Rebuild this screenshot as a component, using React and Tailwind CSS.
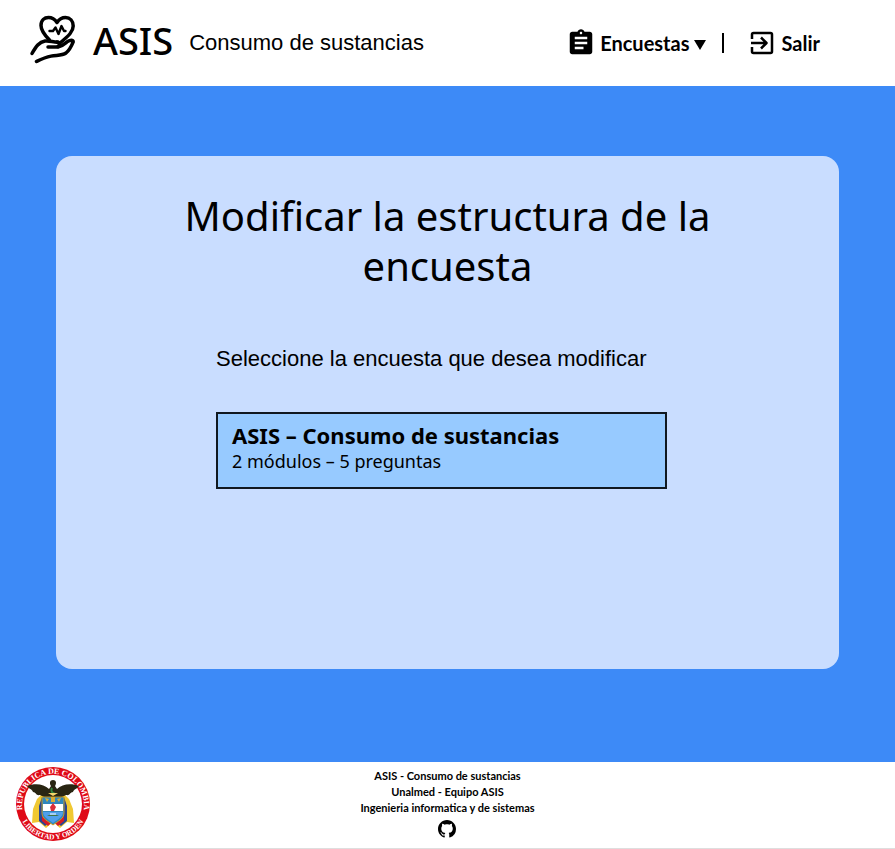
import { MdAssignment } from "react-icons/md";

function HeartHandIcon() {
  return (
    <svg
      viewBox="0 0 46 50"
      className="h-[50px] w-[46px] shrink-0"
      fill="none"
      stroke="#000"
      strokeWidth="3.5"
      strokeLinecap="round"
      strokeLinejoin="round"
      aria-hidden="true"
    >
      <path d="M20.500 26 C15.500 21 12 17 12 11.500 C12 6 15.500 3.500 19.500 3.500 C23.500 3.500 26 5.500 28 8.500 C30 5.500 32.500 3.500 36.500 3.500 C41 3.500 44.200 7 44.200 12 C44.200 17.500 40 21.500 31 29 L28 28" />
      <path strokeWidth="2.4" d="M20.500 17 H24 L26.500 13.500 L29.500 20 L32.500 12 L35 17 H36.500" />
      <path d="M3 39.500 C7 32.500 10 28 16 27 C21 26.300 24 28.500 29 28.300 C31.500 28.800 30.500 32.500 27.500 33 H19" />
      <path d="M29 33 C34 32 36 29.500 38.500 27.500 C41 26 44.300 25.500 44.200 27.800 C42.500 32 40.500 36 37 39 C33 41.800 28 41 22 42.100 C16 43.300 13 44.800 7.500 47.500" />
    </svg>
  );
}

function ExitIcon() {
  return (
    <svg
      viewBox="0 0 24 24"
      className="mr-2 size-6 shrink-0"
      fill="none"
      stroke="#000"
      strokeWidth="2.5"
      strokeLinejoin="round"
      aria-hidden="true"
    >
      <path d="M2 8 V3.500 Q2 2 3.500 2 H20.500 Q22 2 22 3.500 V20.500 Q22 22 20.500 22 H3.500 Q2 22 2 20.500 V16" />
      <path d="M1 12 H16 M11 6.500 L16.500 12 L11 17.500" />
    </svg>
  );
}

function GithubIcon() {
  return (
    <svg viewBox="0 0 16 16" className="size-[18px]" fill="#000" aria-hidden="true">
      <path d="M8 0C3.58 0 0 3.58 0 8c0 3.54 2.29 6.53 5.47 7.59.4.07.55-.17.55-.38 0-.19-.01-.82-.01-1.49-2.01.37-2.53-.49-2.69-.94-.09-.23-.48-.94-.82-1.13-.28-.15-.68-.52-.01-.53.63-.01 1.08.58 1.23.82.72 1.21 1.87.87 2.33.66.07-.52.28-.87.51-1.07-1.78-.2-3.64-.89-3.64-3.95 0-.87.31-1.59.82-2.15-.08-.2-.36-1.02.08-2.12 0 0 .67-.21 2.2.82.64-.18 1.32-.27 2-.27s1.36.09 2 .27c1.53-1.04 2.2-.82 2.2-.82.44 1.1.16 1.92.08 2.12.51.56.82 1.27.82 2.15 0 3.07-1.87 3.75-3.65 3.95.29.25.54.73.54 1.48 0 1.07-.01 1.93-.01 2.2 0 .21.15.46.55.38A8.01 8.01 0 0 0 16 8c0-4.42-3.58-8-8-8z" />
    </svg>
  );
}

function ColombiaSeal() {
  return (
    <svg viewBox="0 0 76 76" className="size-[76px]" role="img" aria-label="República de Colombia, Libertad y Orden">
      <defs>
        <path id="seal-top" d="M9.500 51 A31 31 0 1 1 66.500 51" />
        <path id="seal-bottom" d="M4 48 A35.500 35.500 0 0 0 72 48" />
      </defs>
      <circle cx="38" cy="38" r="37" fill="#df0a17" />
      <circle cx="38" cy="38" r="29" fill="#fff" />
      <g fill="#fff" fontFamily="Liberation Serif, serif" fontWeight="700" textAnchor="middle">
        <text fontSize="8">
          <textPath href="#seal-top" startOffset="50%">REPUBLICA DE COLOMBIA</textPath>
        </text>
        <text fontSize="7.5">
          <textPath href="#seal-bottom" startOffset="50%">LIBERTAD Y ORDEN</textPath>
        </text>
      </g>
      <path fill="#f0c832" d="M28 27 L22 33 L18 43 L17 57 L24 56 L31 62 L38 56 Z M48 27 L54 33 L58 43 L59 57 L52 56 L45 62 L38 56 Z" />
      <path fill="#2b4590" d="M27 31 L24 40 L24 55 L30 60 L35 56 Z M49 31 L52 40 L52 55 L46 60 L41 56 Z" />
      <path fill="#d61a26" d="M27 50 L27 55 L33 60 L37 56 Z M49 50 L49 55 L43 60 L39 56 Z" />
      <path fill="#292512" d="M38 14 C35 14 34 17 36 20 L34 23 C29 18 20 17 12 20 C14 23 17 23 18 26 C21 26 21 30 25 29 L31 32 H45 L51 29 C55 30 55 26 58 26 C59 23 62 23 64 20 C56 17 47 18 42 23 L40 20 C42 17 41 14 38 14 Z" />
      <path fill="none" stroke="#31863d" strokeWidth="2" d="M37 22 C35 26 38 27 40 28" />
      <path fill="#f5d46c" d="M33 27 H43 L38 30 Z" />
      <path fill="#2f87bd" stroke="#c99b23" strokeWidth="1" d="M27 31 H49 V47 C49 53 43 55 38 59 C33 55 27 53 27 47 Z" />
      <path fill="#fff" d="M28 38 H48 V45 H28 Z" />
      <path fill="#4f9fea" d="M28 46 H48 C48 51 42 54 38 57 C34 54 28 51 28 46 Z" />
      <path fill="#d9ae35" d="M30 32 L34 33 L32 36 Z M46 32 L42 33 L44 36 Z M36 31 H40 V36 H36 Z" />
      <path fill="#d9303b" d="M38 37 L41 41 L39 45 H36 L35 41 Z" />
      <path fill="#3f7445" d="M32 49 H44 L42 50 H34 Z" />
      <path fill="none" stroke="#fff" strokeWidth="1" d="M35 48 H41" />
    </svg>
  );
}

function Header() {
  return (
    <header className="flex h-[86px] items-center justify-between bg-white pr-[75px] pl-[29px]">
      <div className="flex items-center">
        <div className="mb-2">
          <HeartHandIcon />
        </div>
        <span className="mb-1.5 ml-[18px] font-['Noto_Sans',sans-serif] text-[38px] leading-[50px] font-medium">ASIS</span>
        <span className="mb-0.5 ml-4 font-['Liberation_Sans',sans-serif] text-[22px] whitespace-nowrap">Consumo de sustancias</span>
      </div>
      <nav className="flex items-center font-['Lato',sans-serif] text-xl font-bold">
        <button type="button" className="flex items-center whitespace-nowrap">
          <MdAssignment className="mr-1 size-[30px]" aria-hidden="true" />
          Encuestas
          <svg viewBox="0 0 12 10" className="mt-1 ml-1 h-2.5 w-3" aria-hidden="true">
            <path d="M0 0 H12 L6 10 Z" />
          </svg>
        </button>
        <span className="mx-4 h-5 w-0.5 bg-black" />
        <a href="#salir" className="ml-2.5 flex items-center">
          <ExitIcon />
          Salir
        </a>
      </nav>
    </header>
  );
}

function Footer() {
  return (
    <footer className="grid h-[87px] grid-cols-[1fr_auto_1fr] items-start border-b border-[#dedede] bg-white">
      <div className="pt-1 pl-[15px]">
        <ColombiaSeal />
      </div>
      <div className="flex flex-col items-center pt-1.5 text-center font-['Lato',sans-serif] text-[11px] leading-4 font-bold">
        <p>ASIS - Consumo de sustancias</p>
        <p>Unalmed - Equipo ASIS</p>
        <p>Ingenieria informatica y de sistemas</p>
        <a href="#github" aria-label="GitHub" className="mt-1">
          <GithubIcon />
        </a>
      </div>
    </footer>
  );
}

export default function App() {
  return (
    <div className="flex min-h-screen flex-col text-black">
      <Header />
      <main className="flex flex-1 flex-col items-center bg-[#3d8af7] pt-[70px] pb-[93px]">
        <section className="flex w-7/8 flex-1 flex-col items-center rounded-2xl bg-[#c9ddff] px-[108px] pt-[35px]">
          <h1 className="text-center font-['Noto_Sans',sans-serif] text-[40px] leading-[50px]">
            Modificar la estructura de la encuesta
          </h1>
          <div className="mt-[54px] mr-3 w-full max-w-[451px]">
            <p className="font-['Liberation_Sans',sans-serif] text-[22px] leading-7 whitespace-nowrap">
              Seleccione la encuesta que desea modificar
            </p>
            <button
              type="button"
              className="mt-[39px] flex h-[77px] w-full flex-col items-start border-2 border-[#101820] bg-[#97caff] px-3.5 pt-2 text-left font-['Noto_Sans',sans-serif]"
            >
              <span className="text-[22px] leading-[26px] font-bold">ASIS – Consumo de sustancias</span>
              <span className="text-lg leading-[26px]">2 módulos – 5 preguntas</span>
            </button>
          </div>
        </section>
      </main>
      <Footer />
    </div>
  );
}
